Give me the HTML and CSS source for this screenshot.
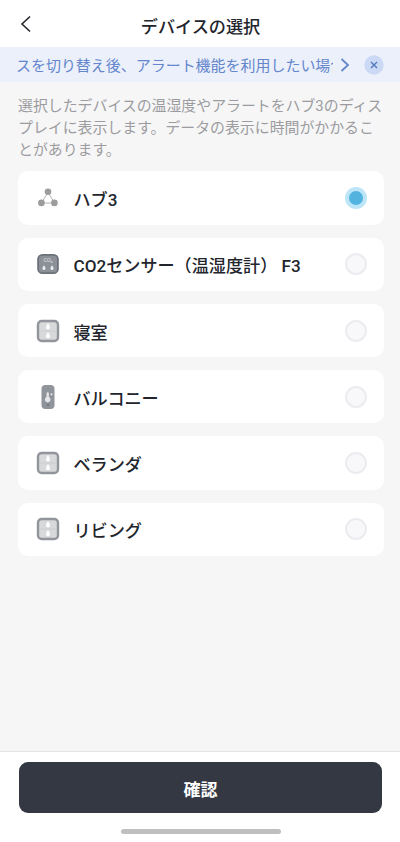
FILE: index.html
```html
<!DOCTYPE html>
<html lang="ja">
<head>
<meta charset="utf-8">
<title>デバイスの選択</title>
<link rel="stylesheet" href="styles.css">
</head>
<body>
<div class="screen">
  <header class="header">
    <svg class="back" viewBox="0 0 12 18"><path d="M10 1.5 2 9l8 7.5"/></svg>
    <h1 class="title">デバイスの選択</h1>
  </header>
  <div class="banner">
    <div class="ticker">スを切り替え後、アラート機能を利用したい場合</div>
    <svg class="more" viewBox="0 0 10 14"><path d="m1.5 1 6.5 6-6.5 6"/></svg>
    <svg class="close" viewBox="0 0 20 20"><circle cx="10" cy="10" r="9.7"/><path d="m7 7 6 6m0-6-6 6"/></svg>
  </div>
  <main class="content">
    <p class="description">選択したデバイスの温湿度やアラートをハブ3のディス<br>プレイに表示します。データの表示に時間がかかるこ<br>とがあります。</p>
    <div class="devices">
      <label class="device">
        <svg class="icon" viewBox="0 0 24 24"><path d="M12 6 5.5 17h13z" fill="none" stroke="#b5b5b6"/><g fill="#9c9c9e"><circle cx="12" cy="5.7" r="3.3"/><circle cx="5.4" cy="16.9" r="3.3"/><circle cx="18.4" cy="16.9" r="3.3"/></g></svg>
        <span class="name">ハブ3</span><span class="radio selected"></span>
      </label>
      <label class="device">
        <svg class="icon" viewBox="0 0 24 24"><rect x="2.1" y="2.8" width="19.800" height="18.400" rx="4.300" fill="#8c9097" stroke="#6d7179" stroke-width="1.800"/><text class="co" x="7.500" y="10">CO₂</text><path d="M8 13.200c2 2.600 2.100 4.700 0 4.700s-2-2.100 0-4.700m8 0c2 2.600 2.100 4.700 0 4.700s-2-2.100 0-4.700" fill="#eceef0"/></svg>
        <span class="name">CO2センサー（温湿度計） F3</span><span class="radio"></span>
      </label>
      <label class="device">
        <svg class="icon" viewBox="0 0 24 24"><rect x="2" y="2" width="20" height="20" rx="3.700" fill="#d8d9da" stroke="#92959b" stroke-width="2.400"/><path d="M4 12h16" stroke="#cdced0"/><path d="M12 4c2.500 3.700 2.600 6.400 0 6.400S9.500 7.700 12 4m0 9c2.500 3.600 2.600 6.200 0 6.200s-2.500-2.600 0-6.200" fill="#fff"/></svg>
        <span class="name">寝室</span><span class="radio"></span>
      </label>
      <label class="device">
        <svg class="icon" viewBox="0 0 24 24"><rect x="5.500" y="0" width="13" height="24" rx="4" fill="#90949b"/><path d="M10.500 8.500a1.200 1.200 0 0 1 2.400 0v3.600a2.800 2.800 0 1 1-2.400 0z" fill="#e4e6e9"/><circle cx="15.500" cy="9.300" r="1.100" fill="#e4e6e9"/><circle cx="12" cy="20" r="1.200" fill="#737780"/></svg>
        <span class="name">バルコニー</span><span class="radio"></span>
      </label>
      <label class="device">
        <svg class="icon" viewBox="0 0 24 24"><rect x="2" y="2" width="20" height="20" rx="3.700" fill="#d8d9da" stroke="#92959b" stroke-width="2.400"/><path d="M4 12h16" stroke="#cdced0"/><path d="M12 4c2.500 3.700 2.600 6.400 0 6.400S9.500 7.700 12 4m0 9c2.500 3.600 2.600 6.200 0 6.200s-2.500-2.600 0-6.200" fill="#fff"/></svg>
        <span class="name">ベランダ</span><span class="radio"></span>
      </label>
      <label class="device">
        <svg class="icon" viewBox="0 0 24 24"><rect x="2" y="2" width="20" height="20" rx="3.700" fill="#d8d9da" stroke="#92959b" stroke-width="2.400"/><path d="M4 12h16" stroke="#cdced0"/><path d="M12 4c2.500 3.700 2.600 6.400 0 6.400S9.500 7.700 12 4m0 9c2.500 3.600 2.600 6.200 0 6.200s-2.500-2.600 0-6.200" fill="#fff"/></svg>
        <span class="name">リビング</span><span class="radio"></span>
      </label>
    </div>
  </main>
  <footer class="footer">
    <button class="confirm">確認</button>
    <div class="home"></div>
  </footer>
</div>
</body>
</html>
```
FILE: styles.css
```css
* { box-sizing: border-box; }
body { margin: 0; font-family: Roboto, "Noto Sans CJK JP", sans-serif; }
.screen { width: 400px; height: 842px; display: flex; flex-direction: column; background: #f6f6f7; overflow: hidden; }
.header { height: 47px; flex: none; display: grid; grid-template-columns: 40px 1fr 40px; align-items: center; padding-top: 1px; background: #fff; }
.back { width: 12px; height: 18px; margin-left: 20px; }
.back path { fill: none; stroke: #25272d; stroke-width: 1.6; }
.title { margin: 0; font-size: 17.15px; line-height: 24px; font-weight: 500; text-align: center; color: #23252d; padding: 5px 0 0 1px; }
.banner { height: 35px; flex: none; display: flex; align-items: center; padding: 1px 0 0 16px; background: #ecf0fa; }
.ticker { width: 317px; flex: none; overflow: hidden; white-space: nowrap; font-size: 14.97px; line-height: 24px; padding-top: 1px; color: #6386cc; }
.more { width: 10px; height: 14px; margin-left: 7px; }
.more path { fill: none; stroke: #6386cc; stroke-width: 1.8; }
.close { width: 20px; height: 20px; margin-left: 14px; }
.close circle { fill: #cbd9f5; }
.close path { stroke: #5177bd; stroke-width: 1.4; }
.content { flex: 1; padding: 13px 16.5px 0 18px; }
.description { margin: 0; font-size: 14.9px; line-height: 22px; white-space: nowrap; color: #9c9ca0; }
.devices { display: flex; flex-direction: column; gap: 13px; margin-top: 10.3px; }
.device { height: 53.3px; display: flex; align-items: center; padding: 0 16.5px 0 18px; border-radius: 10px; background: #fff; }
.icon { width: 24px; height: 24px; flex: none; }
.co { font-size: 5.5px; fill: #e2e4e7; }
.name { flex: 1; margin-left: 13.5px; padding-top: 4px; font-size: 17.12px; line-height: 24px; font-weight: 500; color: #23252d; white-space: nowrap; }
.radio { width: 22px; height: 22px; flex: none; border: 2px solid #ebecef; border-radius: 50%; background: #f8f8fa; }
.selected { border: 4px solid #bce5f7; background: #52b3de; }
.footer { height: 91px; flex: none; padding: 10px 18px 0 19px; border-top: 1px solid #e3e4e5; background: #fff; }
.confirm { display: block; width: 100%; height: 51px; border: 0; border-radius: 9px; padding: 4px 0 0; background: #343843; color: #fff; font: 700 17px/24px Roboto, "Noto Sans CJK JP", sans-serif; }
.home { width: 160px; height: 5px; margin: 16px auto 0; border-radius: 3px; background: #bfbfbf; }
```
